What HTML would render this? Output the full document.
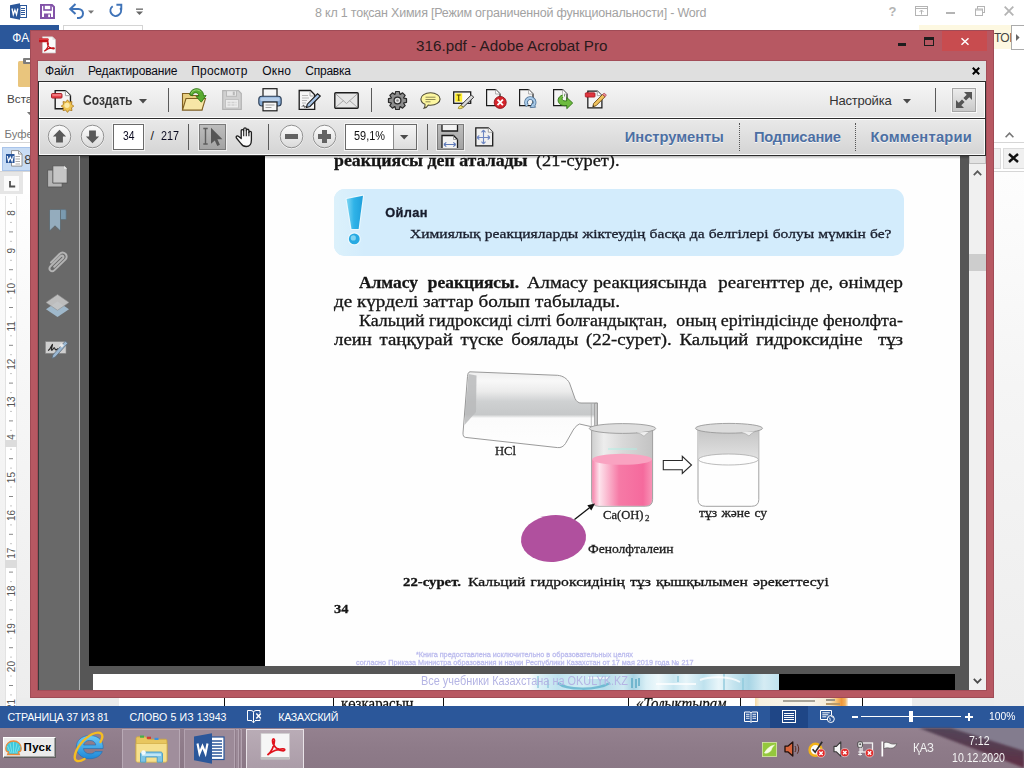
<!DOCTYPE html>
<html><head><meta charset="utf-8"><title>316.pdf</title>
<style>
*{box-sizing:border-box;margin:0;padding:0}
html,body{width:1024px;height:768px;overflow:hidden;background:#fff;font-family:"Liberation Sans",sans-serif}
.a{position:absolute}
.t{position:absolute;white-space:pre;display:block}
svg{position:absolute;overflow:visible}

</style></head><body>
<!-- WORD -->
<div id="word"><div class="a" style="left:0px;top:0px;width:1024px;height:768px;background:#fff;"></div>
<svg style="left:10px;top:3px" width="17" height="17" viewBox="0 0 17 17"><path d="M0 2.2 L10 0.3 V16.7 L0 14.8Z" fill="#2b579a"/><rect x="10" y="2.5" width="6.5" height="12" fill="#fff" stroke="#2b579a" stroke-width="1"/><path d="M11 5.5h4M11 7.5h4M11 9.5h4M11 11.5h4" stroke="#2b579a" stroke-width="1"/><path d="M2 5.5l1.3 6 1.6-4.6 1.6 4.6 1.3-6" fill="none" stroke="#fff" stroke-width="1.3"/></svg>
<svg style="left:40px;top:4px" width="15" height="15" viewBox="0 0 15 15"><path d="M1 1h11l2 2v11H1z" fill="#fff" stroke="#8353a8" stroke-width="2"/><rect x="4" y="1" width="7" height="5" fill="#fff" stroke="#8353a8" stroke-width="1.6"/><rect x="4" y="9.5" width="7" height="4.5" fill="#8353a8"/><rect x="8.2" y="10.5" width="1.8" height="2.6" fill="#fff"/></svg>
<svg style="left:69px;top:3px" width="28" height="16" viewBox="0 0 28 16"><path d="M6.5 1 L1.2 6 L6.5 11" fill="none" stroke="#3f73b8" stroke-width="2"/><path d="M2 6 H9.5 a4.5 4.5 0 0 1 0 9 H8" fill="none" stroke="#3f73b8" stroke-width="2"/><path d="M19 7.5h6l-3 3.2z" fill="#777"/></svg>
<svg style="left:108px;top:3px" width="16" height="16" viewBox="0 0 16 16"><path d="M4.700 3.300A5.300 5.300 0 1 0 12.400 5.100" fill="none" stroke="#3f73b8" stroke-width="2"/><path d="M8.400 1.800H13.300V6.800" fill="none" stroke="#3f73b8" stroke-width="1.900"/></svg>
<svg style="left:135px;top:8px" width="9" height="8" viewBox="0 0 9 8"><rect x="1" y="0.5" width="7" height="1.3" fill="#666"/><path d="M1 3.5h7l-3.5 3.6z" fill="#666"/></svg>
<span id="t1" class="t" style="left:315px;top:6.72px;font:400 12.5px/12.5px 'Liberation Sans',sans-serif;color:#a2a2a2;letter-spacing:-0.198px;">8 кл 1 тоқсан Химия [Режим ограниченной функциональности] - Word</span>
<span id="t2" class="t" style="left:888.5px;top:5.00px;font:700 13px/13px 'Liberation Sans',sans-serif;color:#b4b4b4;">?</span>
<svg style="left:915px;top:6px" width="13" height="10" viewBox="0 0 13 10"><rect x=".5" y=".5" width="12" height="9" fill="none" stroke="#b4b4b4"/><path d="M.5 2.5h12" stroke="#b4b4b4"/><path d="M6.5 8.5V4.2M4.5 6l2-2 2 2" fill="none" stroke="#b4b4b4"/></svg>
<div class="a" style="left:946px;top:12px;width:9px;height:2px;background:#b4b4b4;"></div>
<svg style="left:975px;top:6px" width="10" height="10" viewBox="0 0 10 10"><rect x="2.5" y=".5" width="7" height="6" fill="none" stroke="#b4b4b4"/><rect x=".5" y="3" width="7" height="6.5" fill="#fff" stroke="#b4b4b4"/><path d="M.5 4h7" stroke="#b4b4b4"/></svg>
<svg style="left:1004px;top:6px" width="10" height="10" viewBox="0 0 10 10"><path d="M.7.7l8.6 8.6M9.3.7L.7 9.3" stroke="#b4b4b4" stroke-width="1.8"/></svg>
<div class="a" style="left:0px;top:25px;width:59px;height:24px;background:#2b579a;"></div>
<span id="t3" class="t" style="left:12.3px;top:31.84px;font:400 12px/12px 'Liberation Sans',sans-serif;color:#fff;">ФАЙЛ</span>
<div class="a" style="left:63px;top:25px;width:80px;height:25px;background:#fff;border:1px solid #d4d4d4;border-bottom:none"></div>
<div class="a" style="left:919px;top:25px;width:92px;height:24px;background:#fdf8e1;"></div>
<span id="t4" class="t" style="left:994px;top:32.14px;font:400 12px/12px 'Liberation Sans',sans-serif;color:#444;letter-spacing:-.5px;">ТОІ</span>
<div class="a" style="left:1011px;top:25px;width:14px;height:25px;background:#fff;border:1px solid #ababab"></div>
<svg style="left:1016px;top:34px" width="4" height="7" viewBox="0 0 4 7"><path d="M0 0l3.6 3.5L0 7z" fill="#666"/></svg>
<svg style="left:18px;top:58px" width="14" height="30" viewBox="0 0 14 30"><rect x="0" y="3" width="14" height="26" rx="1.5" fill="#e9c57d"/><rect x="5" y="0" width="9" height="6" rx="1" fill="#7d7d7d"/><rect x="8" y="2" width="4" height="2" fill="#fff"/></svg>
<span id="t5" class="t" style="left:7px;top:93.40px;font:400 11.7px/11.7px 'Liberation Sans',sans-serif;color:#444;">Вставить</span>
<svg style="left:27px;top:112px" width="5" height="3" viewBox="0 0 5 3"><path d="M0 0h5l-2.5 3z" fill="#777"/></svg>
<span id="t6" class="t" style="left:4.5px;top:128.83px;font:400 11.3px/11.3px 'Liberation Sans',sans-serif;color:#777;">Буфер</span>
<div class="a" style="left:0px;top:142px;width:1024px;height:1px;background:#d6d6d6;"></div>
<svg style="left:1005px;top:131.500px" width="9" height="6" viewBox="0 0 9 6"><path d="M.6 5.2l3.9-4 3.9 4" fill="none" stroke="#777" stroke-width="1.6"/></svg>
<div class="a" style="left:2px;top:147px;width:60px;height:24px;background:#c8dcf4;border:1px solid #a9c4ea"></div>
<svg style="left:5.500px;top:149.500px" width="17" height="17" viewBox="0 0 17 17"><path d="M5.500.6h7l3.500 3.500v12h-10.500z" fill="#fff" stroke="#8a8a8a" stroke-width=".9"/><path d="M12.500.6v3.500h3.500" fill="none" stroke="#8a8a8a" stroke-width=".8"/><path d="M9.500 6.500h4.500M9.500 9h4.500M9.500 11.500h4.500M9.500 14h4.500" stroke="#8a8a8a" stroke-width=".7"/><rect x="0" y="4" width="8.500" height="9" fill="#2b579a"/><path d="M1.300 6l1.200 5.200 1.800-4 1.800 4L7.300 6" fill="none" stroke="#fff" stroke-width="1.100"/></svg>
<span id="t7" class="t" style="left:24.3px;top:153.00px;font:400 13px/13px 'Liberation Sans',sans-serif;color:#3a3a3a;">8 кл</span>
<div class="a" style="left:994px;top:148px;width:7px;height:21px;background:#f0f0f0;border:1px solid #dcdcdc;border-left:none"></div>
<div class="a" style="left:1003px;top:148px;width:22px;height:21px;background:#f0f0f0;border:1px solid #dcdcdc"></div>
<svg style="left:1008px;top:153px" width="11" height="10" viewBox="0 0 11 10"><path d="M1 1l9 8M10 1l-9 8" stroke="#111" stroke-width="2.4"/></svg>
<div class="a" style="left:0px;top:171px;width:1024px;height:1px;background:#d6d6d6;"></div>
<div class="a" style="left:0px;top:172px;width:23px;height:22px;background:#e6e6e6;"></div>
<div class="a" style="left:4px;top:176px;width:15px;height:15px;background:#fbfbfb;"></div>
<svg style="left:8.500px;top:181px" width="7" height="7" viewBox="0 0 7 7"><path d="M1 0v5.500h5.200" fill="none" stroke="#505050" stroke-width="1.800"/></svg>
<div class="a" style="left:0px;top:194px;width:31px;height:512px;background:linear-gradient(#fefefe,#f6f6f6 40%,#ededed);"></div>
<div class="a" style="left:5px;top:196px;width:12px;height:510px;background:#fff;border:1px solid #e3e3e3;border-top:none;border-bottom:none"></div>
<svg style="left:0;top:0" width="24" height="706" viewBox="0 0 24 706" font-family="Liberation Sans"><text transform="translate(14.6 213.0) rotate(-90)" text-anchor="middle" font-size="10" fill="#555">8</text><path d="M9 231.9h4" stroke="#8a8a8a" stroke-width="1"/><rect x="10.5" y="221.9" width="1" height="1" fill="#8a8a8a"/><rect x="10.5" y="240.8" width="1" height="1" fill="#8a8a8a"/><text transform="translate(14.6 250.8) rotate(-90)" text-anchor="middle" font-size="10" fill="#555">9</text><path d="M9 269.7h4" stroke="#8a8a8a" stroke-width="1"/><rect x="10.5" y="259.8" width="1" height="1" fill="#8a8a8a"/><rect x="10.5" y="278.7" width="1" height="1" fill="#8a8a8a"/><text transform="translate(14.6 288.6) rotate(-90)" text-anchor="middle" font-size="10" fill="#555">10</text><path d="M9 307.5h4" stroke="#8a8a8a" stroke-width="1"/><rect x="10.5" y="297.6" width="1" height="1" fill="#8a8a8a"/><rect x="10.5" y="316.5" width="1" height="1" fill="#8a8a8a"/><text transform="translate(14.6 326.4) rotate(-90)" text-anchor="middle" font-size="10" fill="#555">11</text><path d="M9 345.3h4" stroke="#8a8a8a" stroke-width="1"/><rect x="10.5" y="335.3" width="1" height="1" fill="#8a8a8a"/><rect x="10.5" y="354.2" width="1" height="1" fill="#8a8a8a"/><text transform="translate(14.6 364.2) rotate(-90)" text-anchor="middle" font-size="10" fill="#555">12</text><path d="M9 383.1h4" stroke="#8a8a8a" stroke-width="1"/><rect x="10.5" y="373.1" width="1" height="1" fill="#8a8a8a"/><rect x="10.5" y="392.1" width="1" height="1" fill="#8a8a8a"/><text transform="translate(14.6 402.0) rotate(-90)" text-anchor="middle" font-size="10" fill="#555">13</text><path d="M9 420.9h4" stroke="#8a8a8a" stroke-width="1"/><rect x="10.5" y="410.9" width="1" height="1" fill="#8a8a8a"/><rect x="10.5" y="429.9" width="1" height="1" fill="#8a8a8a"/><text transform="translate(14.6 439.8) rotate(-90)" text-anchor="middle" font-size="10" fill="#555">14</text><path d="M9 458.7h4" stroke="#8a8a8a" stroke-width="1"/><rect x="10.5" y="448.7" width="1" height="1" fill="#8a8a8a"/><rect x="10.5" y="467.6" width="1" height="1" fill="#8a8a8a"/><text transform="translate(14.6 477.6) rotate(-90)" text-anchor="middle" font-size="10" fill="#555">15</text><path d="M9 496.5h4" stroke="#8a8a8a" stroke-width="1"/><rect x="10.5" y="486.5" width="1" height="1" fill="#8a8a8a"/><rect x="10.5" y="505.4" width="1" height="1" fill="#8a8a8a"/><text transform="translate(14.6 515.4) rotate(-90)" text-anchor="middle" font-size="10" fill="#555">16</text><path d="M9 534.3h4" stroke="#8a8a8a" stroke-width="1"/><rect x="10.5" y="524.4" width="1" height="1" fill="#8a8a8a"/><rect x="10.5" y="543.2" width="1" height="1" fill="#8a8a8a"/><text transform="translate(14.6 553.2) rotate(-90)" text-anchor="middle" font-size="10" fill="#555">17</text><path d="M9 572.1h4" stroke="#8a8a8a" stroke-width="1"/><rect x="10.5" y="562.2" width="1" height="1" fill="#8a8a8a"/><rect x="10.5" y="581.1" width="1" height="1" fill="#8a8a8a"/><text transform="translate(14.6 591.0) rotate(-90)" text-anchor="middle" font-size="10" fill="#555">18</text><path d="M9 609.9h4" stroke="#8a8a8a" stroke-width="1"/><rect x="10.5" y="600.0" width="1" height="1" fill="#8a8a8a"/><rect x="10.5" y="618.9" width="1" height="1" fill="#8a8a8a"/><text transform="translate(14.6 628.8) rotate(-90)" text-anchor="middle" font-size="10" fill="#555">19</text><path d="M9 647.7h4" stroke="#8a8a8a" stroke-width="1"/><rect x="10.5" y="637.8" width="1" height="1" fill="#8a8a8a"/><rect x="10.5" y="656.6" width="1" height="1" fill="#8a8a8a"/><text transform="translate(14.6 666.6) rotate(-90)" text-anchor="middle" font-size="10" fill="#555">20</text><path d="M9 685.5h4" stroke="#8a8a8a" stroke-width="1"/><rect x="10.5" y="675.5" width="1" height="1" fill="#8a8a8a"/><rect x="10.5" y="694.4" width="1" height="1" fill="#8a8a8a"/><text transform="translate(14.6 704.4) rotate(-90)" text-anchor="middle" font-size="10" fill="#555">21</text><path d="M9 723.3h4" stroke="#8a8a8a" stroke-width="1"/><rect x="10.5" y="713.4" width="1" height="1" fill="#8a8a8a"/><rect x="10.5" y="732.2" width="1" height="1" fill="#8a8a8a"/><rect x="10.5" y="203" width="1" height="1" fill="#999"/></svg>
<div class="a" style="left:5px;top:440px;width:12px;height:7px;background:#dcdcdc;"></div>
<div class="a" style="left:5px;top:560px;width:12px;height:8px;background:#dcdcdc;"></div>
<div class="a" style="left:994px;top:172px;width:30px;height:534px;background:linear-gradient(#fdfdfd,#f5f5f5 40%,#ededed);"></div>
<div class="a" style="left:17px;top:698px;width:102px;height:8px;background:#ececec;"></div>
<div class="a" style="left:119px;top:698px;width:793px;height:8px;background:#fff;"></div>
<div class="a" style="left:912px;top:698px;width:82px;height:8px;background:#ececec;"></div>
<div class="a" style="left:224px;top:698px;width:1px;height:8px;background:#111;"></div>
<div class="a" style="left:333px;top:698px;width:1px;height:8px;background:#111;"></div>
<div class="a" style="left:443px;top:698px;width:1px;height:8px;background:#111;"></div>
<div class="a" style="left:628px;top:698px;width:1px;height:8px;background:#111;"></div>
<div class="a" style="left:740px;top:698px;width:1px;height:8px;background:#111;"></div>
<div class="a" style="left:862px;top:698px;width:1px;height:8px;background:#111;"></div>
<div class="a" style="left:330px;top:698px;width:110px;height:8px;overflow:hidden"><span id="t8" class="t" style="left:11px;top:-2.20px;font:400 16px/16px 'Liberation Serif',serif;color:#111;transform:scaleX(0.9238);transform-origin:0 0;-webkit-text-stroke:.3px;">көзқарасын</span></div>
<div class="a" style="left:630px;top:698px;width:110px;height:8px;overflow:hidden"><span id="t9" class="t" style="left:6.4px;top:-1.90px;font:italic 400 16px/16px 'Liberation Serif',serif;color:#111;transform:scaleX(0.9251);transform-origin:0 0;-webkit-text-stroke:.3px;">«Толықтырам</span></div>
<div class="a" style="left:755px;top:698px;width:93px;height:8px;background:linear-gradient(90deg,#f6d9a0 0,#f7f1e2 5%,#f8f5ec 60%,#f5ead2 80%,#f6c77c 87%,#f0983a 93%,#f3b360 97%,#f7efe0 100%);"></div>
<div class="a" style="left:783px;top:700px;width:32px;height:1.5px;background:#a8a498;"></div>
<div class="a" style="left:826px;top:699px;width:9px;height:1.5px;background:#9a9486;"></div>
<div class="a" style="left:826px;top:703px;width:14px;height:1.5px;background:#b89a6a;"></div></div>
<!-- ACROBAT -->
<div id="acro"><div class="a" style="left:30px;top:30px;width:964px;height:668px;background:#b75862;border:1px solid #a04b56"></div>
<div class="a" style="left:37px;top:60px;width:950px;height:631px;background:transparent;border:1px solid #a34d58"></div>
<svg style="left:39px;top:36px" width="18" height="18" viewBox="0 0 18 18"><path d="M3.500.8h10l3 3V17h-13z" fill="#fbfbfb" stroke="#c9c2c2" stroke-width=".7"/><path d="M13.500.8v3h3z" fill="#ddd"/><rect x="0" y="2.600" width="9.500" height="3.600" rx=".6" fill="#c4151c"/><rect x="0" y="2.600" width="9.500" height="1.400" rx=".6" fill="#dd3a40"/><path d="M5.200 15.200c2.200-1.600 4.200-5 4.200-7.800 0-1-1.100-1-1.100 0 0 2.800 3.200 5.400 6.300 5.600 1 0 1-1 0-1.100-2.800-.2-7 1.400-9.400 3.300z" fill="none" stroke="#c4151c" stroke-width="1.100"/></svg>
<span id="t10" class="t" style="left:416px;top:38.33px;font:400 15.2px/15.2px 'Liberation Sans',sans-serif;color:#2a1a1c;letter-spacing:0.026px;">316.pdf - Adobe Acrobat Pro</span>
<div class="a" style="left:898px;top:43px;width:8px;height:2.5px;background:#1d1d1d;"></div>
<div class="a" style="left:924px;top:37px;width:10px;height:9px;background:transparent;border:1.5px solid #1d1d1d;border-top-width:3px"></div>
<div class="a" style="left:942px;top:31px;width:45px;height:20px;background:#c84c4f;"></div>
<svg style="left:961px;top:38px" width="8" height="7" viewBox="0 0 8 7"><path d="M.5.300l7 6.400M7.500.3l-7 6.400" stroke="#fff" stroke-width="1.500"/></svg>
<div class="a" style="left:38px;top:61px;width:948px;height:20px;background:#dfdfdf;"></div>
<span id="t11" class="t" style="left:45px;top:64.84px;font:400 12px/12px 'Liberation Sans',sans-serif;color:#0a0a14;letter-spacing:-0.172px;">Файл</span>
<span id="t12" class="t" style="left:88px;top:64.84px;font:400 12px/12px 'Liberation Sans',sans-serif;color:#0a0a14;letter-spacing:-0.148px;">Редактирование</span>
<span id="t13" class="t" style="left:191.2px;top:64.84px;font:400 12px/12px 'Liberation Sans',sans-serif;color:#0a0a14;letter-spacing:0.212px;">Просмотр</span>
<span id="t14" class="t" style="left:262.2px;top:64.84px;font:400 12px/12px 'Liberation Sans',sans-serif;color:#0a0a14;letter-spacing:0.303px;">Окно</span>
<span id="t15" class="t" style="left:305.2px;top:64.84px;font:400 12px/12px 'Liberation Sans',sans-serif;color:#0a0a14;letter-spacing:-0.213px;">Справка</span>
<svg style="left:972px;top:67px" width="8" height="8" viewBox="0 0 8 8"><path d="M.8.800l6.400 6.400M7.200.8L.8 7.200" stroke="#000" stroke-width="2"/></svg>
<div class="a" style="left:38px;top:81px;width:948px;height:38px;background:linear-gradient(#f6f6f6,#e3e3e3);border:1px solid #2d2d2d;box-shadow:inset 0 0 0 1px #fdfdfd"></div>
<div class="a" style="left:38px;top:118px;width:948px;height:38px;background:linear-gradient(#e9e9e9,#d4d4d4);border:1px solid #2d2d2d;box-shadow:inset 0 0 0 1px #fbfbfb"></div>
<div class="a" style="left:168px;top:88px;width:1.3px;height:24px;background:#5a5a5a;"></div>
<div class="a" style="left:371px;top:88px;width:1.3px;height:24px;background:#5a5a5a;"></div>
<div class="a" style="left:935px;top:88px;width:1.3px;height:24px;background:#5a5a5a;"></div>
<div class="a" style="left:188px;top:124px;width:1.3px;height:26px;background:#5a5a5a;"></div>
<div class="a" style="left:268px;top:124px;width:1.3px;height:26px;background:#5a5a5a;"></div>
<div class="a" style="left:426.5px;top:124px;width:1.3px;height:26px;background:#5a5a5a;"></div>
<svg style="left:51px;top:89px" width="24" height="24" viewBox="0 0 24 24"><g transform="translate(3.500 1) scale(1.140 1.130)"><path d="M.6.600h9l4.400 4.400v11.600H.6z" fill="#f4f4f4" stroke="#1b1b1b" stroke-width="1.200"/><path d="M9.600.6v4.400h4.400" fill="#fff" stroke="#9a9a9a" stroke-width=".8"/></g><rect x=".500" y="4.500" width="10.500" height="4.600" rx="1" fill="#e8434b" stroke="#9e1820" stroke-width=".9"/><rect x="1.400" y="5.300" width="8.800" height="1.400" fill="#f58a8f"/><path d="M16.500 10.800l1.700 2.300 2.800-.5-.5 2.800 2.300 1.700-2.300 1.700.5 2.800-2.800-.5-1.700 2.300-1.700-2.300-2.800.5.500-2.800-2.300-1.700 2.300-1.700-.5-2.800 2.800.5z" fill="#eec451" stroke="#a8741c" stroke-width=".8"/><circle cx="16" cy="16.300" r="2.600" fill="#fbe9a6"/></svg>
<span id="t16" class="t" style="left:82.5px;top:94.12px;font:700 13.8px/13.8px 'Liberation Sans',sans-serif;color:#383838;transform:scaleX(0.8722);transform-origin:0 0;">Создать</span>
<svg style="left:138.600px;top:99px" width="8" height="4.500" viewBox="0 0 8 4.5"><path d="M0 0h8l-4 4.500z" fill="#4a4a4a"/></svg>
<svg style="left:181px;top:87px" width="26" height="25" viewBox="0 0 26 25"><path d="M1.500 23V6.500h7l1.500 2h11V23z" fill="#e9cf80" stroke="#7f5f22" stroke-width="1.100"/><path d="M1.500 23l3.500-11.500h19.500L21 23z" fill="#f7e6a6" stroke="#7f5f22" stroke-width="1.100"/><path d="M8.800 7.800C9 2.500 16-.5 20.300 3.500c1.700 1.600 2.300 3.400 2.300 5.300l2.500-.3-4.800 6.700-5.200-5.700 2.800-.3c0-2.800-3-4.700-5.400-2.700-.7.700-.9 1.500-.8 2.300z" fill="#58ab2f" stroke="#2f7315" stroke-width=".9"/><path d="M10.200 6.500C11.500 3 16.500 1.500 19.500 4.500" fill="none" stroke="#9fd77a" stroke-width="1"/></svg>
<svg style="left:222px;top:90px" width="20" height="20" viewBox="0 0 20 20"><path d="M.7.700h15.800l2.800 2.800v15.800H.7z" fill="#d0d0d0" stroke="#b4b4b4" stroke-width="1.200"/><rect x="4.500" y=".7" width="10" height="5.600" fill="#e7e7e7" stroke="#b8b8b8"/><rect x="10.800" y="1.600" width="2" height="3.600" fill="#b8b8b8"/><rect x="3.500" y="9.500" width="13" height="8.500" fill="#ececec" stroke="#c2c2c2"/><path d="M5.500 12.500h9M5.500 15h9" stroke="#d0d0d0" stroke-width="1.400" stroke-dasharray="3 1"/></svg>
<svg style="left:258px;top:88px" width="24" height="24" viewBox="0 0 24 24"><rect x="5" y=".7" width="14" height="9" fill="#f6f6f6" stroke="#1d1d1d" stroke-width="1.200"/><rect x=".8" y="8.200" width="22.400" height="9.800" rx="3" fill="#84a9d3" stroke="#2c3e55" stroke-width="1.100"/><rect x="2.300" y="9.600" width="19.400" height="3.400" rx="1.600" fill="#b6cde8"/><rect x="5" y="14" width="14" height="8.800" fill="#f6f6f6" stroke="#1d1d1d" stroke-width="1.200"/><path d="M7.500 17h9M7.500 19.500h6" stroke="#a0a0a0" stroke-width="1"/></svg>
<svg style="left:298px;top:89px" width="24" height="22" viewBox="0 0 24 22"><path d="M1.200 1.500h11.300l4.200 4.200V20.400H1.200z" fill="#f6f6f6" stroke="#1b1b1b" stroke-width="1.300"/><path d="M4 6.500h6M4 9h7M4 11.500h5M4 14h4" stroke="#b8b8b8" stroke-width="1"/><path d="M12 3v4h4" fill="none" stroke="#999" stroke-width=".8"/><path d="M19.500 4.800l2.800 2.200L12 17.500l-3.500 1 .8-3.300z" fill="#a7c4e6" stroke="#1b1b1b" stroke-width="1.100"/><path d="M4 17.500c1.500-1.800 2.500-1.200 2 0s1.500.5 3-.5" fill="none" stroke="#1b1b1b" stroke-width=".9"/></svg>
<svg style="left:333.500px;top:91.500px" width="25" height="17" viewBox="0 0 25 17"><rect x=".8" y=".8" width="23.400" height="15.400" rx="1" fill="#e6e6e6" stroke="#1d1d1d" stroke-width="1.400"/><path d="M2 2.200l10.500 9.300L23 2.200M2 15l7.700-6.600M23 15l-7.700-6.600" fill="none" stroke="#a8a8a8" stroke-width="1"/></svg>
<svg style="left:387.800px;top:90.600px" width="19" height="19" viewBox="0 0 18.400 18.400"><polygon points="17.92,7.43 17.92,10.97 15.28,11.49 15.12,11.88 16.62,14.12 14.12,16.62 11.88,15.12 11.49,15.28 10.97,17.92 7.43,17.92 6.91,15.28 6.52,15.12 4.28,16.62 1.78,14.12 3.28,11.88 3.12,11.49 0.48,10.97 0.48,7.43 3.12,6.91 3.28,6.52 1.78,4.28 4.28,1.78 6.52,3.28 6.91,3.12 7.43,0.48 10.97,0.48 11.49,3.12 11.88,3.28 14.12,1.78 16.62,4.28 15.12,6.52 15.28,6.91" fill="#8d8d8d" stroke="#2a2a2a" stroke-width="1.200" stroke-linejoin="round"/><circle cx="9.200" cy="9.200" r="3.300" fill="#e2e2e2" stroke="#2a2a2a" stroke-width="1.200"/><circle cx="9.200" cy="9.200" r="1.200" fill="#888"/></svg>
<svg style="left:419.500px;top:91.500px" width="21" height="18" viewBox="0 0 21 18"><path d="M10.500.8c5.400 0 9.600 2.700 9.600 6.200s-4.200 6.200-9.600 6.200c-.8 0-1.500-.1-2.200-.2-1 1.800-2.400 3-4.300 3.300.8-1.100 1.200-2.500 1-4C2.400 11.200.9 9.200.9 7 .9 3.500 5.100.8 10.500.8z" fill="#fcf6a0" stroke="#4d4a3a" stroke-width="1.100"/><path d="M5.500 5.200h10M5.500 7.500h10M5.500 9.800h5" stroke="#8f8a55" stroke-width="1"/></svg>
<svg style="left:453px;top:91px" width="22" height="19" viewBox="0 0 22 19"><rect x=".7" y=".9" width="17" height="11.400" fill="#fafafa" stroke="#1b1b1b" stroke-width="1.300"/><rect x="2.200" y="2.400" width="7" height="8.300" fill="#ffef2e"/><path d="M3.700 4h4M5.700 4v5.200M4.700 9.300h2" stroke="#5a4a00" stroke-width="1.100"/><path d="M18.200 4l2.600 2.200L10.500 16l-3-1.300z" fill="#d9d9d9" stroke="#3a3a3a" stroke-width="1"/><path d="M7.500 14.500l3 1.400c-1 1.800-4.500 2.200-5.300 1.400.4-1 1-2.200 2.300-2.800z" fill="#f4e36a" stroke="#8a7a1a" stroke-width=".8"/></svg>
<svg style="left:486.400px;top:89.400px" width="21" height="21" viewBox="0 0 21 21"><g><path d="M.6.600h9l4.400 4.400v11.600H.6z" fill="#f4f4f4" stroke="#1b1b1b" stroke-width="1.200"/><path d="M9.600.6v4.400h4.400" fill="#fff" stroke="#9a9a9a" stroke-width=".8"/></g><circle cx="14.200" cy="13.400" r="6" fill="#d5242b" stroke="#8d1116" stroke-width=".9"/><path d="M11.500 10.700l5.400 5.400M16.900 10.700l-5.400 5.400" stroke="#fff" stroke-width="1.900"/></svg>
<svg style="left:519.400px;top:89.400px" width="21" height="21" viewBox="0 0 21 21"><g><path d="M.6.600h9l4.400 4.400v11.600H.6z" fill="#f4f4f4" stroke="#1b1b1b" stroke-width="1.200"/><path d="M9.600.6v4.400h4.400" fill="#fff" stroke="#9a9a9a" stroke-width=".8"/></g><path d="M8.400 16.600A4.300 4.300 0 1 1 14.600 16.200" fill="none" stroke="#4f7296" stroke-width="3.700"/><path d="M11.200 18.600L16.600 18.200 13.200 14z" fill="#a9cbe9" stroke="#4f7296" stroke-width=".9" stroke-linejoin="round"/><path d="M8.400 16.600A4.300 4.300 0 1 1 14.600 16.200" fill="none" stroke="#a9cbe9" stroke-width="2.100"/></svg>
<svg style="left:552.600px;top:89.400px" width="22" height="21" viewBox="0 0 22 21"><g><path d="M.6.600h9l4.400 4.400v11.600H.6z" fill="#f4f4f4" stroke="#1b1b1b" stroke-width="1.200"/><path d="M9.600.6v4.400h4.400" fill="#fff" stroke="#9a9a9a" stroke-width=".8"/></g><path d="M11.200 5.600C6 6.300 3.300 11 6.400 14.600 8.400 16.600 11 16.900 13.800 16.600V19.700L19.700 14 13.800 8.500V11.800C11.500 12.200 9.800 11.800 9.300 10.500 8.800 9 9.800 7.800 11.200 7.300Z" fill="#6dbb3e" stroke="#2f7315" stroke-width=".9" stroke-linejoin="round"/><path d="M10.400 3.500v4.500" stroke="#f4f4f4" stroke-width="1.300"/></svg>
<svg style="left:585px;top:90.400px" width="22" height="20" viewBox="0 0 22 20"><g transform="translate(2.200 .4) scale(1.050 1.050)"><path d="M.6.600h9l4.400 4.400v11.600H.6z" fill="#f4f4f4" stroke="#1b1b1b" stroke-width="1.200"/><path d="M9.600.6v4.400h4.400" fill="#fff" stroke="#9a9a9a" stroke-width=".8"/></g><rect x=".3" y="2.800" width="9.700" height="4.300" rx=".8" fill="#e0353e" stroke="#a31820" stroke-width=".8"/><path d="M17.500 4.500l2.600 2.200-9 9-3.300 1.100.8-3.300z" fill="#f1c35e" stroke="#6b4a12" stroke-width=".9"/><path d="M17.500 4.500l2.600 2.200 1-1.200c.5-.8-1.800-2.700-2.500-2z" fill="#ef8f96" stroke="#9e3b43" stroke-width=".7"/><path d="M7.800 16.800l1.600-.5-1.200-1.100z" fill="#111"/></svg>
<span id="t17" class="t" style="left:829.2px;top:93.80px;font:400 13px/13px 'Liberation Sans',sans-serif;color:#333;letter-spacing:-0.188px;">Настройка</span>
<svg style="left:902.800px;top:99px" width="8" height="4.500" viewBox="0 0 8 4.5"><path d="M0 0h8l-4 4.500z" fill="#4a4a4a"/></svg>
<div class="a" style="left:952px;top:88px;width:24px;height:24px;background:linear-gradient(#ececec,#c9c9c9);border:1px solid #a6a6a6;box-shadow:0 0 0 1px #f8f8f8"></div>
<svg style="left:955px;top:91px" width="18" height="18" viewBox="0 0 18 18"><path d="M9 1h8v8l-2.700-2.700-3.300 3.300-2.600-2.600 3.300-3.300z" fill="#555"/><path d="M9 17H1V9l2.700 2.700 3.300-3.300 2.600 2.600-3.300 3.300z" fill="#555"/></svg>
<svg style="left:47.0px;top:124.0px" width="25" height="25" viewBox="0 0 25 25"><defs><linearGradient id="g59" x1="0" y1="0" x2="0" y2="1"><stop offset="0" stop-color="#fdfdfd"/><stop offset="1" stop-color="#d9d9d9"/></linearGradient></defs><circle cx="12.500" cy="13" r="11.600" fill="none" stroke="#f7f7f7" stroke-width="1"/><circle cx="12.500" cy="12.500" r="11.300" fill="url(#g59)" stroke="#8f8f8f" stroke-width="1"/><path d="M12.500 5.800l6.600 6.800h-3.200v6h-6.800v-6H5.900z" fill="#595959"/></svg>
<svg style="left:80.0px;top:124.0px" width="25" height="25" viewBox="0 0 25 25"><defs><linearGradient id="g92" x1="0" y1="0" x2="0" y2="1"><stop offset="0" stop-color="#fdfdfd"/><stop offset="1" stop-color="#d9d9d9"/></linearGradient></defs><circle cx="12.500" cy="13" r="11.600" fill="none" stroke="#f7f7f7" stroke-width="1"/><circle cx="12.500" cy="12.500" r="11.300" fill="url(#g92)" stroke="#8f8f8f" stroke-width="1"/><path d="M12.500 19.200l6.600-6.800h-3.200v-6h-6.800v6H5.900z" fill="#595959"/></svg>
<div class="a" style="left:113px;top:124px;width:30.5px;height:26px;background:#fff;border:1px solid #6a6a6a;box-shadow:0 0 0 1px #f4f4f4"></div>
<span id="t18" class="t" style="left:122.5px;top:130.42px;font:400 12.5px/12.5px 'Liberation Sans',sans-serif;color:#0a0a20;transform:scaleX(0.8270);transform-origin:0 0;">34</span>
<span id="t19" class="t" style="left:150.5px;top:130.42px;font:400 12.5px/12.5px 'Liberation Sans',sans-serif;color:#222;">/</span>
<span id="t20" class="t" style="left:161.2px;top:130.42px;font:400 12.5px/12.5px 'Liberation Sans',sans-serif;color:#0a0a20;transform:scaleX(0.8629);transform-origin:0 0;">217</span>
<div class="a" style="left:198.5px;top:124px;width:27px;height:26px;background:linear-gradient(#bdbdbd,#a3a3a3);border:1px solid #7b7b7b;box-shadow:0 0 0 1px #f1f1f1"></div>
<svg style="left:202px;top:127px" width="22" height="21" viewBox="0 0 22 21"><path d="M1.300 1.500h4.400M1.300 17h4.400M3.500 1.500V17" stroke="#5e5e5e" stroke-width="1.400" fill="none"/><path d="M9 .800v16l3.800-3.400 2.500 5.600 2.600-1.200-2.500-5.500h5z" fill="#565656"/></svg>
<svg style="left:234.500px;top:126.500px" width="21" height="21" viewBox="0 0 21 21"><path d="M6.200 11.500V3.800c0-1.700 2.500-1.700 2.500 0V2.200c0-1.700 2.600-1.700 2.600 0v1.300c0-1.700 2.600-1.700 2.600 0v2c0-1.600 2.500-1.600 2.500.1v7.300c0 3.700-1.600 6.600-5.200 6.600-3 0-4-1-5.400-3.200L1.400 11c-1-1.600 1.100-2.900 2.300-1.400z" fill="#fafafa" stroke="#1e1e1e" stroke-width="1.300" stroke-linejoin="round"/><path d="M8.700 3.800v5.500M11.300 3.400v5.900M13.900 5v4.300" stroke="#1e1e1e" stroke-width="1.100"/></svg>
<svg style="left:278.9px;top:124.0px" width="25" height="25" viewBox="0 0 25 25"><defs><linearGradient id="g291" x1="0" y1="0" x2="0" y2="1"><stop offset="0" stop-color="#fdfdfd"/><stop offset="1" stop-color="#d9d9d9"/></linearGradient></defs><circle cx="12.500" cy="13" r="11.600" fill="none" stroke="#f7f7f7" stroke-width="1"/><circle cx="12.500" cy="12.500" r="11.300" fill="url(#g291)" stroke="#8f8f8f" stroke-width="1"/><rect x="6" y="10" width="13" height="5" fill="#636363"/></svg>
<svg style="left:312.0px;top:124.0px" width="25" height="25" viewBox="0 0 25 25"><defs><linearGradient id="g324" x1="0" y1="0" x2="0" y2="1"><stop offset="0" stop-color="#fdfdfd"/><stop offset="1" stop-color="#d9d9d9"/></linearGradient></defs><circle cx="12.500" cy="13" r="11.600" fill="none" stroke="#f7f7f7" stroke-width="1"/><circle cx="12.500" cy="12.500" r="11.300" fill="url(#g324)" stroke="#8f8f8f" stroke-width="1"/><path d="M6 10h4v-4h5v4h4v5h-4v4h-5v-4h-4z" fill="#636363"/></svg>
<div class="a" style="left:345px;top:124px;width:71.5px;height:26px;background:#fff;border:1px solid #6a6a6a;box-shadow:0 0 0 1px #f4f4f4"></div>
<div class="a" style="left:393px;top:125px;width:22.5px;height:24px;background:linear-gradient(#f5f5f5,#dcdcdc);border-left:1px solid #8c8c8c"></div>
<span id="t21" class="t" style="left:354.4px;top:130.22px;font:400 12.5px/12.5px 'Liberation Sans',sans-serif;color:#111;transform:scaleX(0.8744);transform-origin:0 0;">59,1%</span>
<svg style="left:400.300px;top:135px" width="8.400" height="4.600" viewBox="0 0 8.400 4.600"><path d="M0 0h8.400l-4.200 4.600z" fill="#4a4a4a"/></svg>
<div class="a" style="left:436.5px;top:124px;width:27px;height:26px;background:linear-gradient(#bdbdbd,#a3a3a3);border:1px solid #7b7b7b;box-shadow:0 0 0 1px #f1f1f1"></div>
<svg style="left:441px;top:125px" width="18" height="24" viewBox="0 0 18 24"><path d="M1 0v6h15.500V0" fill="#f3f3f3" stroke="#1b1b1b" stroke-width="1.300"/><path d="M1 23V10.500h11.500l4 4V23" fill="#f3f3f3" stroke="#1b1b1b" stroke-width="1.300"/><path d="M12.500 10.500v4h4" fill="none" stroke="#888" stroke-width=".8"/><path d="M2.800 19.500h12M2.800 19.500l2.500-2.200M2.800 19.500l2.500 2.200M14.800 19.500l-2.500-2.200M14.800 19.500l-2.500 2.200" stroke="#5d79b8" stroke-width="1.100" fill="none"/></svg>
<svg style="left:474.500px;top:126.500px" width="19" height="20" viewBox="0 0 19 20"><path d="M.8.800h12.500l4.400 4.400v13.600H.8z" fill="#f0f0f0" stroke="#1b1b1b" stroke-width="1.300"/><path d="M13.300.8v4.400h4.400" fill="#fff" stroke="#888" stroke-width=".8"/><path d="M8.500 3v14M2 10.500h13M8.500 3L6.500 5.300M8.500 3l2 2.300M8.500 17l-2-2.300M8.500 17l2-2.300M2 10.500l2.300-2M2 10.500l2.300 2M15 10.500l-2.300-2M15 10.500l-2.300 2" stroke="#6d86c2" stroke-width="1.100" fill="none"/></svg>
<span id="t22" class="t" style="left:624.8px;top:129.56px;font:700 14.7px/14.7px 'Liberation Sans',sans-serif;color:#4c6fa3;letter-spacing:-0.019px;text-shadow:0 1px 0 rgba(255,255,255,.8);">Инструменты</span>
<span id="t23" class="t" style="left:754px;top:129.56px;font:700 14.7px/14.7px 'Liberation Sans',sans-serif;color:#4c6fa3;letter-spacing:-0.240px;text-shadow:0 1px 0 rgba(255,255,255,.8);">Подписание</span>
<span id="t24" class="t" style="left:870.5px;top:129.56px;font:700 14.7px/14.7px 'Liberation Sans',sans-serif;color:#4c6fa3;letter-spacing:0.239px;text-shadow:0 1px 0 rgba(255,255,255,.8);">Комментарии</span>
<div class="a" style="left:738.5px;top:123px;width:1px;height:28px;background:transparent;border-left:1px dotted #555"></div>
<div class="a" style="left:855px;top:123px;width:1px;height:28px;background:transparent;border-left:1px dotted #555"></div>
<div class="a" style="left:38px;top:156px;width:1px;height:534px;background:#3a3a3a;"></div>
<div class="a" style="left:39px;top:156px;width:39.5px;height:534px;background:#696969;"></div>
<div class="a" style="left:78.5px;top:156px;width:1px;height:534px;background:#b4b4b4;"></div>
<div class="a" style="left:79.5px;top:156px;width:0.8px;height:534px;background:#2f2f2f;"></div>
<svg style="left:47px;top:165px" width="21" height="23" viewBox="0 0 21 23"><path d="M.6 5h14.600v17H.6z" fill="#b5b5b5" stroke="#585858" stroke-width=".9"/><path d="M5.800.8h11.400l3 3v14.300H5.800z" fill="#c6c6c6" stroke="#555" stroke-width=".9"/><path d="M17.200.8v3h3z" fill="#eee"/></svg>
<svg style="left:48.500px;top:208.500px" width="18" height="23" viewBox="0 0 18 23"><path d="M11.500.6h4.200c1 0 1.500.6 1.500 1.500v8.400h-5.700z" fill="#7a9ab0" stroke="#5b6e7b" stroke-width=".6"/><path d="M.5 2c0-1 .5-1.500 1.500-1.500h9.500V22l-5.500-5.200L.5 22z" fill="#94acbd" stroke="#56646d" stroke-width=".7"/></svg>
<svg style="left:46px;top:250px" width="22" height="24" viewBox="0 0 22 24"><path d="M8.200 16.800l8.600-8.400c1.800-1.700-.4-3.800-2.100-2.100L4.500 16.200c-3 3 1 6.900 4 3.900l10.800-10.500c4-4-1.800-9.600-5.800-5.600L5 12.500" fill="none" stroke="#b4b4b4" stroke-width="2" stroke-linecap="round"/></svg>
<svg style="left:45.500px;top:294px" width="23" height="24" viewBox="0 0 23 24"><path d="M11.500 7.500L23 15.300 11.500 23 0 15.300z" fill="#9fb8cb"/><path d="M11.500.5L23 8.400 11.500 16.300 0 8.400z" fill="#c4c4c4" fill-opacity=".92" stroke="#8e8e8e" stroke-width=".6"/></svg>
<svg style="left:45px;top:340px" width="24" height="20" viewBox="0 0 24 20"><rect x=".5" y="1.700" width="20.500" height="11.600" fill="#cfcfcf" stroke="#8a8a8a" stroke-width=".6"/><path d="M3 10.500c2.500-1 4-6.500 4.500-6.300.6.300-2 5.800-.8 6 1 .1 1.800-2.500 2.600-2.400.8.100.3 2 1.600 2.100 1.200 0 1.700-1 2.400-1.400" fill="none" stroke="#222" stroke-width="1.100"/><path d="M20.300 1.200l2.500 2L10.300 17 7 18.500l.8-3.500z" fill="#9ab7d2" stroke="#5a6a78" stroke-width=".8"/><path d="M15.200 4.300L18 6.600" stroke="#e8e8e8" stroke-width="3.200"/></svg></div>
<!-- PAGE -->
<div id="doc"><div class="a" style="left:80px;top:156px;width:889px;height:534px;background:#565656;"></div>
<div class="a" style="left:89px;top:156px;width:176px;height:510px;background:#000;"></div>
<div class="a" style="left:265px;top:156px;width:695px;height:510px;background:#fefefe;"></div>
<div class="a" style="left:80px;top:156px;width:889px;height:3px;background:linear-gradient(rgba(0,0,0,.28),rgba(0,0,0,0));"></div>
<div class="a" style="left:93px;top:674px;width:686px;height:16px;background:#fff;"></div>
<div class="a" style="left:528px;top:674px;width:251px;height:16px;background:linear-gradient(90deg,#fff 0,#d9eff6 5%,#bfe3ef 12%,#d4edf5 22%,#b5dcea 30%,#cfe9f2 38%,#a9d4e4 42%,#d9eff6 47%,#eef8fb 52%,#c9e7f1 58%,#e6f4f9 63%,#bfe2ee 70%,#e9f6fa 76%,#c4e4ef 82%,#a8d5e5 88%,#d5ecf4 94%,#c0e2ee 100%);"></div>
<svg style="left:528px;top:674px" width="251" height="16" viewBox="0 0 251 16"><path d="M30 9c8 7 38 8 52 0" fill="none" stroke="#5fb2cc" stroke-width="2.500" opacity=".8"/><path d="M104 4v10M108 5v9M111 4v8" stroke="#4fa3c0" stroke-width="1.600" opacity=".8"/><path d="M10 2v12M20 6v8M150 2v6M196 0v16M215 4v12" stroke="#8fcadd" stroke-width="2" opacity=".7"/><path d="M128 10h40M60 4h20M172 6c10-4 30-4 40 2" stroke="#fff" stroke-width="2" opacity=".75" fill="none"/></svg>
<div class="a" style="left:779px;top:674px;width:176px;height:16px;background:#000;"></div>
<span id="t25" class="t" style="left:421px;top:675.14px;font:400 12px/12px 'Liberation Sans',sans-serif;color:#b4b4e4;transform:scaleX(0.9093);transform-origin:0 0;">Все учебники Казахстана на OKULYK.KZ</span>
<div class="a" style="left:969px;top:156px;width:17px;height:534px;background:#f0f0f0;"></div>
<div class="a" style="left:969px;top:156px;width:17px;height:8px;background:#e2e2e2;border:1px solid #bdbdbd;border-top:none"></div>
<div class="a" style="left:969px;top:254px;width:17px;height:17px;background:#cdcdcd;"></div>
<svg style="left:973px;top:170px" width="9" height="6" viewBox="0 0 9 6"><path d="M.8 5.200l3.700-3.900 3.700 3.900" fill="none" stroke="#5a5a5a" stroke-width="1.700"/></svg>
<svg style="left:973px;top:678px" width="9" height="6" viewBox="0 0 9 6"><path d="M.8.800l3.700 3.900L8.200.8" fill="none" stroke="#4a4a4a" stroke-width="1.700"/></svg>
<div class="a" style="left:0;top:156px;width:1024px;height:510px;overflow:hidden"><div class="a" style="left:0;top:-156px;width:1024px;height:768px;filter:blur(.3px);-webkit-text-stroke:.3px"><span id="t26" class="t" style="left:334px;top:152.97px;font:700 15.8px/15.8px 'Liberation Serif',serif;color:#151515;transform:scaleX(1.1285);transform-origin:0 0;">реакциясы деп аталады</span>
<span id="t27" class="t" style="left:536px;top:152.97px;font:400 15.8px/15.8px 'Liberation Serif',serif;color:#151515;transform:scaleX(1.1590);transform-origin:0 0;">(21-сурет).</span>
<div class="a" style="left:334px;top:189px;width:569.5px;height:67px;background:#d3ecfc;border-radius:11px"></div>
<div class="a" style="left:334px;top:189px;width:30px;height:67px;background:linear-gradient(90deg,#dcf1fb,#d3ecfc);border-radius:11px 0 0 11px"></div>
<svg style="left:342px;top:192px" width="26" height="56" viewBox="0 0 26 56"><defs><linearGradient id="ex" x1="0" y1="0" x2="1" y2="0"><stop offset="0" stop-color="#7fd6f3"/><stop offset=".45" stop-color="#2fb3e8"/><stop offset="1" stop-color="#1f9fdb"/></linearGradient></defs><path d="M4.600 7L21 3.700 16.600 37h-7.100z" fill="url(#ex)" stroke="#e9f8fe" stroke-width="2.200" stroke-linejoin="round"/><path d="M4.600 7L21 3.700 16.600 37h-7.100z" fill="url(#ex)"/><circle cx="12.300" cy="46.900" r="6.600" fill="#e9f8fe"/><circle cx="12.300" cy="46.900" r="5.400" fill="#27a9e2"/><circle cx="11.300" cy="45.900" r="2.600" fill="#7fd4f2"/></svg>
<span id="t28" class="t" style="left:385.2px;top:207.16px;font:700 12.8px/12.8px 'Liberation Sans',sans-serif;color:#171c2c;letter-spacing:0.351px;">Ойлан</span>
<span id="t29" class="t" style="left:409.5px;top:227.16px;font:400 13.3px/13.3px 'Liberation Serif',serif;color:#1a1f2e;transform:scaleX(1.168);transform-origin:0 0;word-spacing:0.230px;">Химиялық реакцияларды жіктеудің басқа да белгілері болуы мүмкін бе?</span>
<span id="t30" class="t" style="left:359px;top:274.77px;font:700 15.8px/15.8px 'Liberation Serif',serif;color:#151515;transform:scaleX(1.1);transform-origin:0 0;word-spacing:5.126px;">Алмасу реакциясы.</span>
<span id="t31" class="t" style="left:527px;top:274.77px;font:400 15.8px/15.8px 'Liberation Serif',serif;color:#151515;transform:scaleX(1.19);transform-origin:0 0;word-spacing:0.996px;">Алмасу реакциясында  реагенттер де, өнімдер</span>
<span id="t32" class="t" style="left:334px;top:293.77px;font:400 15.8px/15.8px 'Liberation Serif',serif;color:#151515;transform:scaleX(1.2112);transform-origin:0 0;">де күрделі заттар болып табылады.</span>
<span id="t33" class="t" style="left:359px;top:313.07px;font:400 15.8px/15.8px 'Liberation Serif',serif;color:#151515;transform:scaleX(1.13);transform-origin:0 0;word-spacing:0.037px;">Кальций гидроксиді сілті болғандықтан,  оның ерітіндісінде фенолфта-</span>
<span id="t34" class="t" style="left:334px;top:331.97px;font:400 15.8px/15.8px 'Liberation Serif',serif;color:#151515;transform:scaleX(1.19);transform-origin:0 0;word-spacing:2.535px;">леин таңқурай түске боялады (22-сурет). Кальций гидроксидіне  тұз</span>
<svg style="left:0;top:0" width="1024" height="768" viewBox="0 0 1024 768">
<defs>
<linearGradient id="bt" x1="0" y1="0" x2="0" y2="1"><stop offset="0" stop-color="#eeeeee"/><stop offset=".12" stop-color="#f8f8f8"/><stop offset=".26" stop-color="#ebebeb"/><stop offset=".39" stop-color="#cfd1d2"/><stop offset=".565" stop-color="#c6c8c9"/><stop offset=".61" stop-color="#fbfbfb"/><stop offset="1" stop-color="#fefefe"/></linearGradient>
<linearGradient id="pk" x1="0" y1="0" x2="1" y2="0"><stop offset="0" stop-color="#f683ab"/><stop offset=".12" stop-color="#fde3ec"/><stop offset=".22" stop-color="#fbc4d7"/><stop offset=".45" stop-color="#f67aa6"/><stop offset=".85" stop-color="#f56a9d"/><stop offset="1" stop-color="#f893b6"/></linearGradient>
<linearGradient id="gl" x1="0" y1="0" x2="1" y2="0"><stop offset="0" stop-color="#cfcfcf"/><stop offset=".2" stop-color="#ededed"/><stop offset=".5" stop-color="#d9d9d9"/><stop offset="1" stop-color="#c3c3c3"/></linearGradient>
<linearGradient id="gl2" x1="0" y1="0" x2="0" y2="1"><stop offset="0" stop-color="#c6c6c6"/><stop offset="1" stop-color="#e2e2e2"/></linearGradient>
</defs>
<!-- bottle -->
<path d="M470 371.800L557.500 375.300C563 375.800 567 378.500 569.500 383L575 398.500C576.500 401.500 578.500 403 581 403L597.400 403 597.400 428 579.500 424C576 425.500 573.500 429 571.500 433L565.500 443.500C563.500 446.500 561 448 557.500 447.600L465.400 437.400C463.500 437 463 435.500 463 433L467.500 376.500C467.700 373.500 468.500 372 470 371.800Z" fill="url(#bt)" stroke="#8e8e8e" stroke-width=".9"/>
<path d="M468.500 374L476.500 375.500 476 412 464.500 425Z" fill="#b9babb" opacity=".85"/>
<path d="M594.500 403.500L597.400 403 597.400 428 594.500 427.500Z" fill="#c9c9c9" stroke="#8a8a8a" stroke-width=".6"/>
<path d="M591.300 403.500V427" stroke="#a5a5a5" stroke-width=".7"/>
<!-- beaker 1 -->
<path d="M591.600 430V499.500Q591.600 506.200 599 506.200H645.500Q652.600 506.200 652.600 499.500V430Z" fill="url(#gl)" stroke="#999" stroke-width=".9"/>
<path d="M592.200 459.300V499.500Q592.200 505.700 599 505.700H645.500Q652 505.700 652 499.500V459.300Z" fill="url(#pk)"/>
<ellipse cx="622.100" cy="459.300" rx="30" ry="5.500" fill="#f9a3c1"/>
<path d="M608 449h29" stroke="#aef0e4" stroke-width="1.200" opacity=".8"/>
<ellipse cx="622.500" cy="428.500" rx="33.200" ry="4.900" fill="#dedede" stroke="#9a9a9a" stroke-width=".9"/>
<path d="M636 432.500q5 1 8 3.800 2-2.500 6-4.600" fill="#eee" stroke="#aaa" stroke-width=".7"/>
<!-- block arrow -->
<path d="M663.300 460.500H682.300V456.300L691.500 465 682.300 473.500V469.800H663.300Z" fill="#fff" stroke="#2a2a2a" stroke-width="1.100"/>
<!-- beaker 2 -->
<path d="M698 430V499.500Q698 506.300 705.500 506.300H751.500Q758.800 506.300 758.800 499.500V430Z" fill="#fefefe" stroke="#999" stroke-width=".9"/>
<path d="M698.500 430.500H758.300V459.500H698.500Z" fill="url(#gl2)"/>
<ellipse cx="728.400" cy="459.500" rx="29.900" ry="5.500" fill="#fdfdfd" stroke="#aaa" stroke-width=".8"/>
<ellipse cx="729" cy="428.300" rx="33.500" ry="4.900" fill="#dcdcdc" stroke="#9a9a9a" stroke-width=".9"/>
<path d="M741 432.300q5 1 8 3.700 2-2.500 6-4.500" fill="#eee" stroke="#aaa" stroke-width=".7"/>
<!-- phenolphthalein -->
<ellipse cx="553.500" cy="538.500" rx="32.600" ry="23.300" fill="#b0509e" transform="rotate(-6 553.500 538.500)"/>
<path d="M574.500 519.500L589.500 507.800" stroke="#111" stroke-width="1.300"/>
<path d="M595 503.600L587.300 505.300 591.300 510.400Z" fill="#111"/>
</svg>
<span id="t35" class="t" style="left:495px;top:443.71px;font:400 13px/13px 'Liberation Serif',serif;color:#222;transform:scaleX(0.9690);transform-origin:0 0;">HCl</span>
<span id="t36" class="t" style="left:603.3px;top:508.11px;font:400 13px/13px 'Liberation Serif',serif;color:#222;transform:scaleX(0.9668);transform-origin:0 0;">Ca(OH)</span>
<span id="t37" class="t" style="left:644.5px;top:514.80px;font:400 8px/8px 'Liberation Serif',serif;color:#333;transform:scaleX(1.1250);transform-origin:0 0;">2</span>
<span id="t38" class="t" style="left:698.8px;top:506.11px;font:400 13px/13px 'Liberation Serif',serif;color:#222;transform:scaleX(1.04);transform-origin:0 0;word-spacing:0.989px;">тұз және су</span>
<span id="t39" class="t" style="left:587.5px;top:542.11px;font:400 13px/13px 'Liberation Serif',serif;color:#222;transform:scaleX(1.0409);transform-origin:0 0;">Фенолфталеин</span>
<span id="t40" class="t" style="left:403.3px;top:574.89px;font:700 13.5px/13.5px 'Liberation Serif',serif;color:#151515;transform:scaleX(1.0931);transform-origin:0 0;">22-сурет.</span>
<span id="t41" class="t" style="left:468px;top:574.89px;font:400 13.5px/13.5px 'Liberation Serif',serif;color:#151515;transform:scaleX(1.16);transform-origin:0 0;word-spacing:1.009px;">Кальций гидроксидінің тұз қышқылымен әрекеттесуі</span>
<span id="t42" class="t" style="left:334.3px;top:601.69px;font:700 13.5px/13.5px 'Liberation Serif',serif;color:#151515;transform:scaleX(1.0741);transform-origin:0 0;">34</span>
<span id="t43" class="t" style="left:416px;top:650.57px;font:400 7px/7px 'Liberation Sans',sans-serif;color:#bdbdee;transform:scaleX(1.0383);transform-origin:0 0;">*Книга предоставлена исключительно в образовательных целях</span>
<span id="t44" class="t" style="left:355.8px;top:658.57px;font:400 7px/7px 'Liberation Sans',sans-serif;color:#bdbdee;transform:scaleX(1.0359);transform-origin:0 0;">согласно Приказа Министра образования и науки Республики Казахстан от 17 мая 2019 года № 217</span></div></div></div>
<!-- STATUS+TASKBAR -->
<div id="bars"><div class="a" style="left:0px;top:706px;width:1024px;height:22px;background:#2b579a;"></div>
<span id="t45" class="t" style="left:7.5px;top:711.73px;font:400 10.6px/10.6px 'Liberation Sans',sans-serif;color:#fff;letter-spacing:-0.155px;">СТРАНИЦА 37 ИЗ 81</span>
<span id="t46" class="t" style="left:129.5px;top:711.73px;font:400 10.6px/10.6px 'Liberation Sans',sans-serif;color:#fff;letter-spacing:0.091px;">СЛОВО 5 ИЗ 13943</span>
<span id="t47" class="t" style="left:278.3px;top:711.73px;font:400 10.6px/10.6px 'Liberation Sans',sans-serif;color:#fff;letter-spacing:-0.295px;">КАЗАХСКИЙ</span>
<svg style="left:247px;top:710px" width="15" height="14" viewBox="0 0 15 14"><path d="M.5 10.500V.500H4Q6.500.500 6.500 2.500V12.500M.5 10.500H5M6.500 2.500Q6.500.500 9 .500H13V2.800M13 9.300V10.500H8M5 11.200L6.500 12.800 8 11.200" fill="none" stroke="#fff" stroke-width="1"/><path d="M9.300 3.600l4.500 4.800M13.800 3.600L9.300 8.400" stroke="#fff" stroke-width="1.500"/></svg>
<svg style="left:744px;top:710.500px" width="14" height="12" viewBox="0 0 14 12"><path d="M.5 1h5.500l1 .8 1-.8h5.500v9.500H8l-1 .8-1-.8H.5z" fill="none" stroke="#fff" stroke-width="1"/><path d="M7 1.800v9.500M2 3.300h3.500M2 5.300h3.500M2 7.300h3.500M8.500 3.300H12M8.500 5.300H12M8.500 7.300H12" stroke="#fff" stroke-width=".9"/></svg>
<div class="a" style="left:770px;top:706px;width:38px;height:22px;background:#1f4686;"></div>
<svg style="left:782px;top:710px" width="14" height="13" viewBox="0 0 14 13" shape-rendering="crispEdges"><rect x=".5" y=".5" width="13" height="12" fill="none" stroke="#fff"/><path d="M2 3.500h10M2 5.500h10M2 7.500h10M2 9.500h10" stroke="#fff" stroke-width="1"/></svg>
<svg style="left:820px;top:710px" width="15" height="13" viewBox="0 0 15 13"><path d="M9 9.500H.5V.5h11V5" fill="none" stroke="#fff"/><path d="M2.300 2.800h7.500M2.300 4.800h6M2.300 6.800h4" stroke="#fff" stroke-width="1"/><circle cx="10.800" cy="9" r="3.500" fill="#2b579a" stroke="#fff" stroke-width="1"/><path d="M8.500 7.500c1.500.5 2 1.500 1.500 3.500M10.500 5.800c1 1 2.500 1 3 2" stroke="#fff" stroke-width=".9" fill="none"/></svg>
<div class="a" style="left:851.5px;top:716px;width:6px;height:2px;background:#fff;"></div>
<div class="a" style="left:861px;top:716.3px;width:100px;height:1.2px;background:#fff;"></div>
<div class="a" style="left:909px;top:711px;width:4.3px;height:11px;background:#fff;"></div>
<div class="a" style="left:965.2px;top:716px;width:8px;height:2px;background:#fff;"></div>
<div class="a" style="left:968.2px;top:713px;width:2px;height:8px;background:#fff;"></div>
<span id="t48" class="t" style="left:988.5px;top:711.49px;font:400 11px/11px 'Liberation Sans',sans-serif;color:#fff;transform:scaleX(0.9417);transform-origin:0 0;">100%</span>
<div class="a" style="left:0px;top:728px;width:1024px;height:40px;background:linear-gradient(#94818f,#8e7b89 50%,#8a7785);"></div>
<svg style="left:880px;top:728px" width="144" height="40" viewBox="0 0 144 40"><defs><linearGradient id="wd" x1="0" y1="1" x2=".35" y2="0"><stop offset="0" stop-color="#6d2c41"/><stop offset=".45" stop-color="#5c3348"/><stop offset="1" stop-color="#51475a"/></linearGradient><filter id="wb"><feGaussianBlur stdDeviation=".9"/></filter></defs><path d="M71 0H144V24Z" fill="#837c8e"/><path d="M39 0H71L144 23V40Z" fill="url(#wd)" filter="url(#wb)"/></svg>
<div class="a" style="left:2.5px;top:737px;width:53px;height:21px;background:#ebebeb;border:1px solid;border-color:#fff #5f5f5f #5f5f5f #fff;box-shadow:inset -1px -1px 0 #a6a6a6"></div>
<svg style="left:5px;top:740px" width="17" height="16" viewBox="0 0 17 16"><path d="M8.500 1C4 1 .8 4.300.8 8.200c0 2.300 1.300 3.700 2.900 3.700L2.600 14.500h11.800l-1.100-2.600c1.600 0 2.900-1.400 2.900-3.700C16.200 4.300 13 1 8.500 1z" fill="#3ec9dc" stroke="#e98a3c" stroke-width="1.300"/><path d="M8.500 2v11M5 3.200l2 9.800M12 3.200l-2 9.800M2.500 6l3 7M14.500 6l-3 7" stroke="#8fe6ee" stroke-width=".7"/></svg>
<span id="t49" class="t" style="left:23.6px;top:741.97px;font:700 11.5px/11.5px 'Liberation Sans',sans-serif;color:#000;letter-spacing:0.323px;">Пуск</span>
<svg style="left:73px;top:731px" width="32" height="32" viewBox="0 0 32 32"><defs><linearGradient id="ie" x1="0" y1="0" x2="0" y2="1"><stop offset="0" stop-color="#6ccaf6"/><stop offset="1" stop-color="#1e88d8"/></linearGradient></defs><g transform="translate(-4.500 -2.800) scale(1.300 1.130)"><path d="M16.500 6.500c-6.500 0-10.500 4.600-10.500 10.200S10 27 16.500 27c4.500 0 8-2.400 9.500-6.300h-5.600c-.8 1.300-2.100 2-3.900 2-2.900 0-4.700-1.900-5-4.700h15.100c.6-6.600-3.400-11.500-10.100-11.500zm-4.900 8.400c.5-2.500 2.200-4.100 4.800-4.100s4.300 1.600 4.600 4.100z" fill="url(#ie)" stroke="#1b6fb8" stroke-width=".5"/></g><path d="M27.500 11C32 3 27.500-.5 19.500 3 10.500 7.500 2.800 17.500 1.800 25c-.8 5.800 4 6.500 9.700 3" fill="none" stroke="#f5bd22" stroke-width="2.400" stroke-linecap="round"/></svg>
<div class="a" style="left:122px;top:729px;width:58px;height:40px;background:#a08e9c;border:1px solid #b8a9b5;border-bottom:none"></div>
<svg style="left:135px;top:734px" width="33" height="29" viewBox="0 0 33 29"><path d="M1 4.500c0-1 .6-1.700 1.600-1.700h8l2 2.400h17.800c1 0 1.600.7 1.600 1.700V26H1z" fill="#e8c65e" stroke="#c9a33c" stroke-width=".8"/><rect x="5" y="1.500" width="4" height="2.200" fill="#46b04a"/><rect x="12" y="2.700" width="4" height="2.200" fill="#d63b30"/><rect x="19.500" y="3.800" width="4" height="2.200" fill="#3a8fe0"/><path d="M1 9.500h31V26.500c0 1-.6 1.700-1.600 1.700H2.600c-1 0-1.600-.7-1.600-1.700z" fill="#f6e08e" stroke="#d3b04a" stroke-width=".8"/><path d="M5.500 28.200V20c0-1.300.8-2 2-2h18c1.200 0 2 .7 2 2v8.200h-5.300V23h-11.400v5.200z" fill="#7cc4e6" stroke="#4a9ac4" stroke-width=".9"/><path d="M7 19.500h19v2.500H7z" fill="#bfe5f5"/><circle cx="8.500" cy="18.500" r="2.300" fill="#fff" opacity=".9"/></svg>
<div class="a" style="left:184px;top:729px;width:51px;height:40px;background:#9c8a98;border:1px solid #b3a3b0;border-bottom:none"></div>
<div class="a" style="left:236px;top:729px;width:2.5px;height:40px;background:#9c8a98;border:1px solid #b3a3b0;border-left:none;border-bottom:none"></div>
<div class="a" style="left:239.5px;top:729px;width:2.5px;height:40px;background:#9c8a98;border:1px solid #b3a3b0;border-left:none;border-bottom:none"></div>
<svg style="left:194px;top:733px" width="31" height="31" viewBox="0 0 31 31"><rect x="15" y="4" width="15" height="22.500" fill="#fff" stroke="#2b579a" stroke-width="1.200"/><path d="M18 8h10M18 11h10M18 14h10M18 17h10M18 20h10M18 23h10" stroke="#2b579a" stroke-width="1.300"/><path d="M0 3.500L18 .3V30.700L0 27.300z" fill="#2b579a"/><path d="M3.500 10.500l2 10 3-7.500 3 7.500 2-10" fill="none" stroke="#fff" stroke-width="2.100"/></svg>
<div class="a" style="left:246px;top:729px;width:58px;height:40px;background:linear-gradient(#b9acb6,#ab9ca8);border:1px solid #e9e3e8;border-bottom:none"></div>
<svg style="left:260px;top:732px" width="31" height="28" viewBox="0 0 31 28"><rect x="1" y="1.500" width="28.500" height="25.500" fill="#f6f6f6" stroke="#cfcfcf" stroke-width=".6"/><rect x="1" y="25" width="28.500" height="2.500" fill="#c2c2c2"/><path d="M7.500 23c3.500-2.600 7-9 7-14.500 0-2.200-2-2.200-2 0 0 5.500 5.200 10 10.800 10.300 2 0 2-1.900 0-2-5.200-.3-12 2.600-15.800 6.200z" fill="none" stroke="#e1131c" stroke-width="1.700"/></svg>
<svg style="left:762px;top:742px" width="15" height="15" viewBox="0 0 15 15"><rect x=".4" y=".4" width="14.200" height="14.200" fill="#94c83d" stroke="#d8e8a8" stroke-width=".8"/><path d="M2.500 11c2-4 5-7 10-8-2 1.500-2.500 3-3.500 5.500C8 10 5 12 2.500 11zM2.500 11l3-3" fill="#f4fbe0" stroke="#f4fbe0" stroke-width=".5"/></svg>
<svg style="left:784px;top:741px" width="17" height="16" viewBox="0 0 17 16"><path d="M1 5.200h2.800L8.800.9v14.200L3.800 10.800H1z" fill="#d9653c" stroke="#23100c" stroke-width="1.300" stroke-linejoin="round"/><path d="M11 5c1.100 1.800 1.100 4.200 0 6M13.300 3.300c1.900 2.900 1.900 6.500 0 9.400" fill="none" stroke="#5a2a20" stroke-width="1"/></svg>
<svg style="left:808px;top:741px" width="18" height="17" viewBox="0 0 18 17"><circle cx="7.500" cy="8.800" r="6" fill="#fbfbfb" stroke="#f2b21a" stroke-width="2.400"/><path d="M4.600 8.200l2.600 3L14.200.800" fill="none" stroke="#2a2a2a" stroke-width="1.700"/><circle cx="13" cy="12.200" r="4.100" fill="#e12a2a" stroke="#fff" stroke-width=".5"/><path d="M11.300 10.500l3.400 3.400M14.700 10.500l-3.400 3.400" stroke="#fff" stroke-width="1.400"/></svg>
<svg style="left:832.500px;top:741px" width="17" height="17" viewBox="0 0 17 17"><path d="M1 5.400h2.400L7.800.9v14.200L3.400 10.800H1z" fill="#f6f6f6" stroke="#3a3a3a" stroke-width="1.100" stroke-linejoin="round"/><circle cx="11.800" cy="11.600" r="4.100" fill="#e12a2a" stroke="#fff" stroke-width=".5"/><path d="M10.100 9.900l3.400 3.400M13.500 9.900l-3.400 3.400" stroke="#fff" stroke-width="1.400"/></svg>
<svg style="left:856.500px;top:741px" width="18" height="17" viewBox="0 0 18 17"><rect x="5" y="2" width="10.500" height="9" fill="none" stroke="#f2f2f2" stroke-width="1.300"/><rect x=".8" y=".8" width="4.600" height="5.600" rx="1.200" fill="#f2f2f2" stroke="#3a3a3a" stroke-width=".9"/><circle cx="3.100" cy="3.200" r="1" fill="#555"/><path d="M3.100 6.400V14.500M1.200 11h3.800M1.200 13.500h3.800" stroke="#f2f2f2" stroke-width="1.200"/><circle cx="12.500" cy="12" r="4.100" fill="#e12a2a" stroke="#fff" stroke-width=".5"/><path d="M10.800 10.300l3.400 3.400M14.200 10.300l-3.400 3.400" stroke="#fff" stroke-width="1.400"/></svg>
<svg style="left:880.500px;top:741px" width="17" height="16" viewBox="0 0 17 16"><path d="M1.300.500V15.500" stroke="#fff" stroke-width="1.700"/><path d="M3 1.800c2.200-1 3.800-.6 5.300.2 2.200 1.200 4.500 1.500 7.500.6-1 2.800-2.300 4-4.600 4.500-2 .4-3-.2-4.600-.3-1.300-.1-2.500.3-3.600 1z" fill="#f6f6f6" stroke="#4a4a4a" stroke-width=".6"/></svg>
<span id="t50" class="t" style="left:912.6px;top:742.23px;font:400 12.6px/12.6px 'Liberation Sans',sans-serif;color:#f2f2f2;transform:scaleX(0.9051);transform-origin:0 0;">ҚАЗ</span>
<span id="t51" class="t" style="left:968.8px;top:735.10px;font:400 12.4px/12.4px 'Liberation Sans',sans-serif;color:#f4f4f4;transform:scaleX(0.8497);transform-origin:0 0;">7:12</span>
<span id="t52" class="t" style="left:952px;top:751.50px;font:400 12.4px/12.4px 'Liberation Sans',sans-serif;color:#f4f4f4;transform:scaleX(0.8546);transform-origin:0 0;">10.12.2020</span></div>
</body></html>
